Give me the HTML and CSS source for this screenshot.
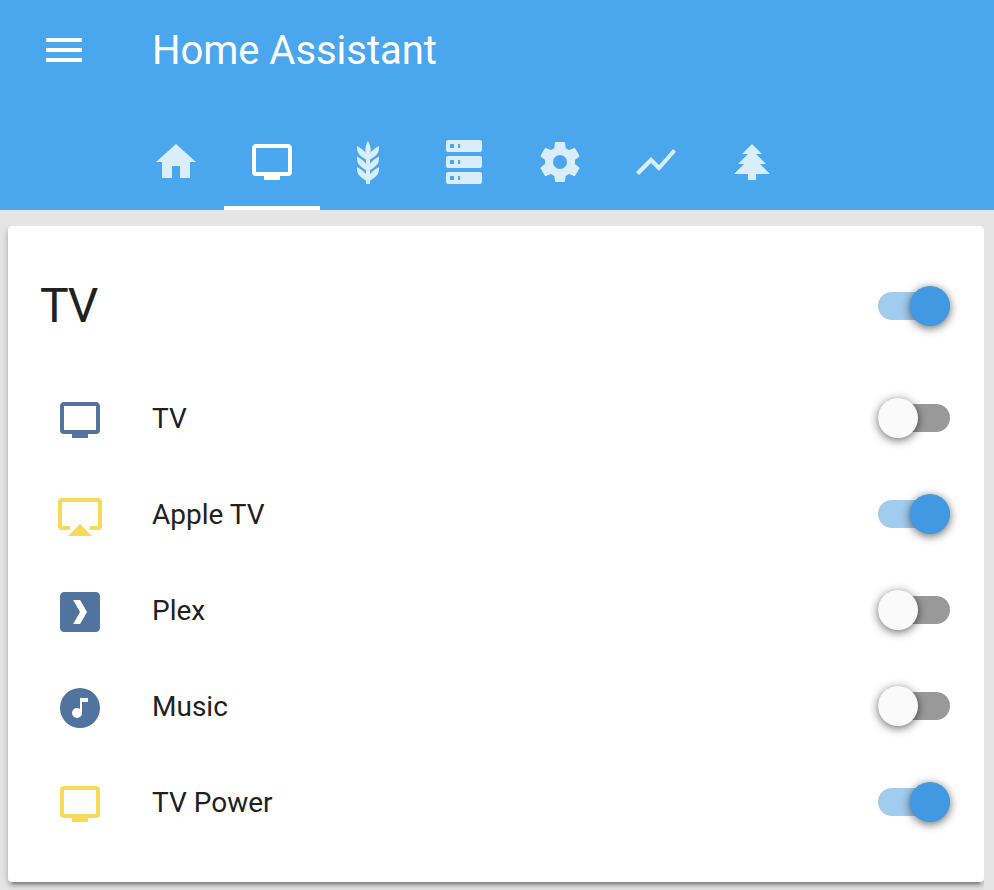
FILE: index.html
```html
<!DOCTYPE html>
<html lang="en">
<head>
<meta charset="utf-8">
<title>Home Assistant</title>
<link rel="stylesheet" href="styles.css">
</head>
<body>
<svg class="sprite" aria-hidden="true">
  <symbol id="tv" viewBox="0 0 24 24"><path d="M20,17H4V5H20M20,3H4C2.89,3 2,3.89 2,5V17A2,2 0 0,0 4,19H8V21H16V19H20A2,2 0 0,0 22,17V5C22,3.89 21.1,3 20,3Z"/></symbol>
</svg>
<header class="header">
  <div class="toolbar">
    <svg class="icon" viewBox="0 0 24 24"><path d="M3,6H21V8H3V6M3,11H21V13H3V11M3,16H21V18H3V16Z"/></svg>
    <h1 class="title">Home Assistant</h1>
  </div>
  <nav class="tabs">
    <a class="tab"><svg class="icon" viewBox="0 0 24 24"><path d="M10,20V14H14V20H19V12H22L12,3L2,12H5V20H10Z"/></svg></a>
    <a class="tab active"><svg class="icon"><use href="#tv"/></svg></a>
    <a class="tab"><svg class="icon" viewBox="0 0 24 24"><path d="M7.33,18.33C6.5,17.17 6.5,15.83 6.5,14.5C8.17,15.5 9.83,16.5 10.67,17.67L11,18.23V15.95C9.5,15.05 8.08,14.13 7.33,13.08C6.5,11.92 6.5,10.58 6.5,9.25C8.17,10.25 9.83,11.25 10.67,12.42L11,13V10.7C9.5,9.8 8.08,8.88 7.33,7.83C6.5,6.67 6.5,5.33 6.5,4C8.17,5 9.83,6 10.67,7.17C10.77,7.31 10.86,7.46 10.94,7.62C10.77,7 10.66,6.42 10.65,5.82C10.64,4.31 11.3,2.76 11.96,1.21C12.65,2.69 13.34,4.18 13.35,5.69C13.36,6.32 13.25,6.96 13.07,7.59C13.15,7.45 13.23,7.31 13.33,7.17C14.17,6 15.83,5 17.5,4C17.5,5.33 17.5,6.67 16.67,7.83C15.92,8.88 14.5,9.8 13,10.7V13L13.33,12.42C14.17,11.25 15.83,10.25 17.5,9.25C17.5,10.58 17.5,11.92 16.67,13.08C15.92,14.13 14.5,15.05 13,15.95V18.23L13.33,17.67C14.17,16.5 15.83,15.5 17.5,14.5C17.5,15.83 17.5,17.17 16.67,18.33C15.92,19.38 14.5,20.3 13,21.2V23H11V21.2C9.5,20.3 8.08,19.38 7.33,18.33Z"/></svg></a>
    <a class="tab"><svg class="icon" viewBox="0 0 24 24"><path fill-rule="evenodd" d="M4,1H20A1,1 0 0,1 21,2V6A1,1 0 0,1 20,7H4A1,1 0 0,1 3,6V2A1,1 0 0,1 4,1M4,9H20A1,1 0 0,1 21,10V14A1,1 0 0,1 20,15H4A1,1 0 0,1 3,14V10A1,1 0 0,1 4,9M4,17H20A1,1 0 0,1 21,18V22A1,1 0 0,1 20,23H4A1,1 0 0,1 3,22V18A1,1 0 0,1 4,17M9,5H10V3H9V5M9,13H10V11H9V13M9,21H10V19H9V21M5,3V5H7V3H5M5,11V13H7V11H5M5,19V21H7V19H5Z"/></svg></a>
    <a class="tab"><svg class="icon" viewBox="0 0 24 24"><path d="M12,15.5A3.5,3.5 0 0,1 8.5,12A3.5,3.5 0 0,1 12,8.5A3.5,3.5 0 0,1 15.5,12A3.5,3.5 0 0,1 12,15.5M19.43,12.97C19.47,12.65 19.5,12.33 19.5,12C19.5,11.67 19.47,11.34 19.43,11L21.54,9.37C21.73,9.22 21.78,8.95 21.66,8.73L19.66,5.27C19.54,5.05 19.27,4.96 19.05,5.05L16.56,6.05C16.04,5.66 15.5,5.32 14.87,5.07L14.5,2.42C14.46,2.18 14.25,2 14,2H10C9.75,2 9.54,2.18 9.5,2.42L9.13,5.07C8.5,5.32 7.96,5.66 7.44,6.05L4.95,5.05C4.73,4.96 4.46,5.05 4.34,5.27L2.34,8.73C2.21,8.95 2.27,9.22 2.46,9.37L4.57,11C4.53,11.34 4.5,11.67 4.5,12C4.5,12.33 4.53,12.65 4.57,12.97L2.46,14.63C2.27,14.78 2.21,15.05 2.34,15.27L4.34,18.73C4.46,18.95 4.73,19.03 4.95,18.95L7.44,17.94C7.96,18.34 8.5,18.68 9.13,18.93L9.5,21.58C9.54,21.82 9.75,22 10,22H14C14.25,22 14.46,21.82 14.5,21.58L14.87,18.93C15.5,18.67 16.04,18.34 16.56,17.94L19.05,18.95C19.27,19.03 19.54,18.95 19.66,18.73L21.66,15.27C21.78,15.05 21.73,14.78 21.54,14.63L19.43,12.97Z"/></svg></a>
    <a class="tab"><svg class="icon" viewBox="0 0 24 24"><path d="M3.5,18.49L9.5,12.48L13.5,16.48L22,6.92L20.59,5.51L13.5,13.48L9.5,9.48L2,16.99Z"/></svg></a>
    <a class="tab"><svg class="icon" viewBox="0 0 24 24"><path d="M10,21V18H3L8,13H5L10,8H7L12,3L17,8H14L19,13H16L21,18H14V21H10Z"/></svg></a>
  </nav>
</header>
<main class="card">
  <div class="card-header">
    <h2 class="card-title">TV</h2>
    <span class="toggle on"></span>
  </div>
  <div class="rows">
    <div class="row">
      <svg class="icon"><use href="#tv"/></svg>
      <span class="name">TV</span>
      <span class="toggle"></span>
    </div>
    <div class="row lit">
      <svg class="icon" viewBox="0 0 24 24"><path d="M6,22H18L12,16M21,3H3A2,2 0 0,0 1,5V17A2,2 0 0,0 3,19H7V17H3V5H21V17H17V19H21A2,2 0 0,0 23,17V5A2,2 0 0,0 21,3Z"/></svg>
      <span class="name">Apple TV</span>
      <span class="toggle on"></span>
    </div>
    <div class="row">
      <svg class="icon" viewBox="0 0 24 24"><path fill-rule="evenodd" d="M4,2C2.89,2 2,2.89 2,4V20C2,21.11 2.89,22 4,22H20C21.11,22 22,21.11 22,20V4C22,2.89 21.11,2 20,2H4M8.56,6H12.06L15.5,12L12.06,18H8.56L12,12L8.56,6Z"/></svg>
      <span class="name">Plex</span>
      <span class="toggle"></span>
    </div>
    <div class="row">
      <svg class="icon" viewBox="0 0 24 24"><path fill-rule="evenodd" d="M16,9V7H12V12.5C11.58,12.19 11.07,12 10.5,12A2.5,2.5 0 0,0 8,14.5A2.5,2.5 0 0,0 10.5,17A2.5,2.5 0 0,0 13,14.5V9H16M12,2A10,10 0 0,1 22,12A10,10 0 0,1 12,22A10,10 0 0,1 2,12A10,10 0 0,1 12,2Z"/></svg>
      <span class="name">Music</span>
      <span class="toggle"></span>
    </div>
    <div class="row lit">
      <svg class="icon"><use href="#tv"/></svg>
      <span class="name">TV Power</span>
      <span class="toggle on"></span>
    </div>
  </div>
</main>
</body>
</html>
```
FILE: styles.css
```css
* {
  box-sizing: border-box;
}

body {
  margin: 0;
  height: 890px;
  overflow: hidden;
  background: #e5e5e5;
  color: #212121;
  font-family: Roboto, "Liberation Sans", sans-serif;
  -webkit-font-smoothing: antialiased;
}

.sprite {
  display: none;
}

.icon {
  display: block;
  flex: none;
  width: 48px;
  height: 48px;
  fill: currentColor;
}

.header {
  height: 210px;
  background: #4aa7ee;
  color: #fff;
}

.toolbar {
  display: flex;
  align-items: center;
  height: 114px;
  padding: 0 40px 14px;
}

.title {
  margin: 0 0 0 64px;
  padding-top: 2px;
  font-size: 40px;
  font-weight: 400;
  line-height: 48px;
  letter-spacing: -0.04px;
}

.tabs {
  display: flex;
  height: 96px;
  padding-left: 128px;
}

.tab {
  display: flex;
  justify-content: center;
  align-items: center;
  width: 96px;
  border-bottom: 4px solid transparent;
  padding-top: 4px;
}

.tab .icon {
  opacity: 0.8;
}

.tab.active {
  border-bottom-color: #fff;
}

.tab.active .icon {
  opacity: 1;
}

/* The shadow only shows on the left and bottom edges. */
.card {
  width: 976px;
  height: 656px;
  margin: 16px 0 0 8px;
  padding: 32px;
  border-radius: 4px;
  background: #fff;
  box-shadow: 0 4px 4px rgba(0, 0, 0, 0.18), 0 2px 10px rgba(0, 0, 0, 0.14), 0 6px 2px -4px rgba(0, 0, 0, 0.25);
  clip-path: inset(0 0 -8px -8px);
}

.card-header {
  display: flex;
  justify-content: space-between;
  align-items: center;
  height: 96px;
  padding-right: 2px;
}

.card-title {
  margin: 0;
  font-size: 48px;
  font-weight: 400;
  line-height: 80px;
  letter-spacing: -0.025em;
}

.rows {
  display: flex;
  flex-direction: column;
  gap: 16px;
  margin-top: 24px;
}

.row {
  display: flex;
  align-items: center;
  height: 80px;
  padding: 0 2px 0 16px;
}

.row .icon {
  margin-top: 4px;
  color: #50749d;
}

.row.lit .icon {
  color: #f9d959;
}

.name {
  flex: 1;
  margin-left: 48px;
  padding-top: 2px;
  font-size: 28px;
  line-height: 40px;
}

.toggle {
  display: flex;
  align-items: center;
  flex: none;
  width: 72px;
  height: 28px;
  border-radius: 14px;
  background: #999;
}

.toggle::before {
  content: "";
  flex: none;
  width: 40px;
  height: 40px;
  border-radius: 50%;
  background: #fafafa;
  box-shadow: 0 2px 10px rgba(0, 0, 0, 0.6);
}

.toggle.on {
  justify-content: flex-end;
  background: #a1cbef;
}

.toggle.on::before {
  background: #4299e1;
}
```
